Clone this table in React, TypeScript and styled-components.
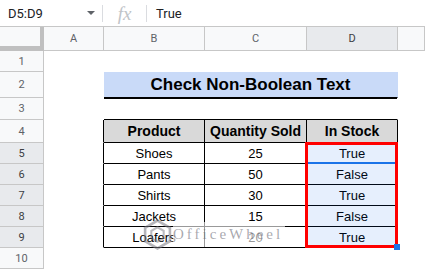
import React from 'react';
import styled, { createGlobalStyle } from 'styled-components';

const GlobalStyle = createGlobalStyle`
  html, body {
    margin: 0;
    padding: 0;
    background: #ffffff;
  }
  body {
    width: 425px;
    height: 270px;
    overflow: hidden;
    font-family: 'Liberation Sans', Arial, sans-serif;
  }
`;

const Screen = styled.div`
  width: 425px;
  height: 270px;
  display: flex;
  flex-direction: column;
  overflow: hidden;
`;

/* ---------- formula bar ---------- */

const FormulaBar = styled.div`
  flex: none;
  height: 27px;
  box-sizing: border-box;
  border-bottom: 1px solid #c7c7c7;
  display: flex;
  align-items: center;
`;

const NameBox = styled.div`
  width: 102px;
  box-sizing: border-box;
  padding: 0 7px 0 8px;
  display: flex;
  align-items: center;
  justify-content: space-between;
  font-family: Roboto, 'Liberation Sans', sans-serif;
  font-size: 13px;
  color: #202124;
`;

const Caret = styled.span`
  width: 0;
  height: 0;
  border-left: 4px solid transparent;
  border-right: 4px solid transparent;
  border-top: 4px solid #5f6368;
`;

const Divider = styled.span`
  flex: none;
  width: 1px;
  height: 17px;
  background: #dadce0;
`;

const FxSlot = styled.span`
  width: 43px;
  text-align: center;
  font-family: 'Liberation Serif', serif;
  font-style: italic;
  font-size: 19px;
  line-height: 1;
  color: #c0c4c8;
`;

const FormulaText = styled.span`
  padding-left: 9px;
  font-family: Roboto, 'Liberation Sans', sans-serif;
  font-size: 13px;
  color: #202124;
`;

/* ---------- sheet grid ---------- */

const Sheet = styled.div`
  position: relative;
  flex: 1;
  display: grid;
  grid-template-columns: 44px 60px 101px 102px 91px 1fr;
  grid-template-rows: 24px 21px 26px 22px 23px repeat(6, 21px);
`;

type Placed = { $col: string; $row: string };

const Corner = styled.div<Placed>`
  grid-column: ${(p) => p.$col};
  grid-row: ${(p) => p.$row};
  box-sizing: border-box;
  background: #f8f9fa;
  border-right: 4px solid #c0c0c0;
  border-bottom: 5px solid #c0c0c0;
`;

const HeaderCell = styled.div<Placed & { $selected?: boolean }>`
  grid-column: ${(p) => p.$col};
  grid-row: ${(p) => p.$row};
  box-sizing: border-box;
  display: flex;
  align-items: center;
  justify-content: center;
  background: ${(p) => (p.$selected ? '#e8eaed' : '#f8f9fa')};
  border-right: 1px solid #c7c7c7;
  border-bottom: 1px solid #c7c7c7;
  font-family: Roboto, 'Liberation Sans', sans-serif;
  font-size: 11px;
  color: ${(p) => (p.$selected ? '#3c4043' : '#5f6368')};
`;

const Cell = styled.div<
  Placed & {
    $right?: string;
    $bottom?: string;
    $top?: string;
    $bg?: string;
    $bold?: boolean;
    $size?: number;
  }
>`
  grid-column: ${(p) => p.$col};
  grid-row: ${(p) => p.$row};
  box-sizing: border-box;
  display: flex;
  align-items: center;
  justify-content: center;
  min-width: 0;
  background: ${(p) => p.$bg ?? 'transparent'};
  border-right: 1px solid ${(p) => p.$right ?? 'transparent'};
  border-bottom: 1px solid ${(p) => p.$bottom ?? 'transparent'};
  box-shadow: ${(p) => (p.$top ? `inset 0 1px 0 ${p.$top}` : 'none')};
  font-family: 'Liberation Sans', Arial, sans-serif;
  font-size: ${(p) => p.$size ?? 13}px;
  font-weight: ${(p) => (p.$bold ? 700 : 400)};
  color: #000000;
  white-space: nowrap;
`;

/* ---------- selection overlays ---------- */

const SelectionFill = styled.div<Placed>`
  grid-column: ${(p) => p.$col};
  grid-row: ${(p) => p.$row};
  background: rgba(14, 101, 235, 0.1);
  pointer-events: none;
`;

const ActiveCell = styled.div<Placed>`
  grid-column: ${(p) => p.$col};
  grid-row: ${(p) => p.$row};
  box-sizing: border-box;
  border-bottom: 2px solid #1a73e8;
  pointer-events: none;
`;

const RangeBorder = styled.div<Placed>`
  grid-column: ${(p) => p.$col};
  grid-row: ${(p) => p.$row};
  position: relative;
  margin: -1px 0 0 -2px;
  border: 3px solid #ff0000;
  pointer-events: none;
`;

const FillHandle = styled.span`
  position: absolute;
  right: -5px;
  bottom: -5px;
  width: 6px;
  height: 6px;
  background: #1a73e8;
`;

/* ---------- watermark ---------- */

const Watermark = styled.div`
  position: absolute;
  left: 143px;
  top: 192px;
  display: flex;
  align-items: center;
  gap: 1px;
  pointer-events: none;
`;

const WatermarkBand = styled.span`
  background: rgba(255, 255, 255, 0.6);
  padding: 4px 2px 4px 0;
  font-family: 'Liberation Serif', serif;
  font-size: 15px;
  letter-spacing: 3px;
  color: rgba(110, 110, 120, 0.6);
`;

const columns = ['A', 'B', 'C', 'D', 'E'];

const products: [string, string, string][] = [
  ['Shoes', '25', 'True'],
  ['Pants', '50', 'False'],
  ['Shirts', '30', 'True'],
  ['Jackets', '15', 'False'],
  ['Loafers', '20', 'True'],
];

// grid line numbers: column 1 is the row header, A starts at 2
const col = (i: number) => `${i + 2}`;
// sheet row n lives on grid row n + 1 (grid row 1 is the column header)
const row = (n: number) => `${n + 1}`;

const BLACK = '#000000';

export default function App() {
  const cells: React.ReactNode[] = [];

  // plain rows 1 and 10
  [1, 10].forEach((r) => {
    columns.forEach((_, i) => cells.push(<Cell key={`p${r}-${i}`} $col={col(i)} $row={row(r)} />));
  });

  // row 2: merged title over B:D
  cells.push(<Cell key="t-a" $col={col(0)} $row={row(2)} />);
  cells.push(
    <Cell key="t-title" $col="3 / 6" $row={row(2)} $bg="#c9daf8" $bottom={BLACK} $bold $size={17}>
      Check Non-Boolean Text
    </Cell>
  );
  cells.push(<Cell key="t-e" $col={col(4)} $row={row(2)} />);

  // row 3: spacer carrying the title's lower rule and the table's top edge
  cells.push(<Cell key="s-a" $col={col(0)} $row={row(3)} />);
  cells.push(<Cell key="s-mid" $col="3 / 6" $row={row(3)} $top={BLACK} $bottom={BLACK} />);
  cells.push(<Cell key="s-e" $col={col(4)} $row={row(3)} />);

  // row 4: table header
  cells.push(<Cell key="h-a" $col={col(0)} $row={row(4)} $right={BLACK} />);
  ['Product', 'Quantity Sold', 'In Stock'].forEach((label, i) =>
    cells.push(
      <Cell key={`h-${i}`} $col={col(i + 1)} $row={row(4)} $bg="#d9d9d9" $right={BLACK} $bottom={BLACK} $bold $size={14}>
        {label}
      </Cell>
    )
  );
  cells.push(<Cell key="h-e" $col={col(4)} $row={row(4)} />);

  // rows 5-9: data
  products.forEach((values, idx) => {
    const r = idx + 5;
    cells.push(<Cell key={`d${r}-a`} $col={col(0)} $row={row(r)} $right={BLACK} />);
    values.forEach((v, i) =>
      cells.push(
        <Cell key={`d${r}-${i}`} $col={col(i + 1)} $row={row(r)} $right={BLACK} $bottom={BLACK}>
          {v}
        </Cell>
      )
    );
    cells.push(<Cell key={`d${r}-e`} $col={col(4)} $row={row(r)} />);
  });

  return (
    <>
      <GlobalStyle />
      <Screen>
        <FormulaBar>
          <NameBox>
            D5:D9
            <Caret />
          </NameBox>
          <Divider />
          <FxSlot>fx</FxSlot>
          <Divider />
          <FormulaText>True</FormulaText>
        </FormulaBar>

        <Sheet>
          <Corner $col="1" $row="1" />
          {columns.map((c, i) => (
            <HeaderCell key={c} $col={col(i)} $row="1" $selected={c === 'D'}>
              {c === 'E' ? '' : c}
            </HeaderCell>
          ))}
          {Array.from({ length: 10 }, (_, k) => k + 1).map((n) => (
            <HeaderCell key={`r${n}`} $col="1" $row={row(n)} $selected={n >= 5 && n <= 9}>
              {n}
            </HeaderCell>
          ))}

          {cells}

          <SelectionFill $col={col(3)} $row={`${row(5)} / ${Number(row(9)) + 1}`} />
          <ActiveCell $col={col(3)} $row={row(5)} />
          <RangeBorder $col={col(3)} $row={`${row(5)} / ${Number(row(9)) + 1}`}>
            <FillHandle />
          </RangeBorder>

          <Watermark>
            <svg width="29" height="31" viewBox="0 0 28 30" fill="none">
              <path
                d="M14 1.5 L26 8.5 V21.5 L14 28.5 L2 21.5 V8.5 Z"
                stroke="rgba(120,120,130,0.55)"
                strokeWidth="2.5"
              />
              <path d="M14 8 L20 11.5 V18.5 L14 22 L8 18.5 V11.5 Z" stroke="rgba(120,120,130,0.5)" strokeWidth="2" />
            </svg>
            <WatermarkBand>OfficeWheel</WatermarkBand>
          </Watermark>
        </Sheet>
      </Screen>
    </>
  );
}
